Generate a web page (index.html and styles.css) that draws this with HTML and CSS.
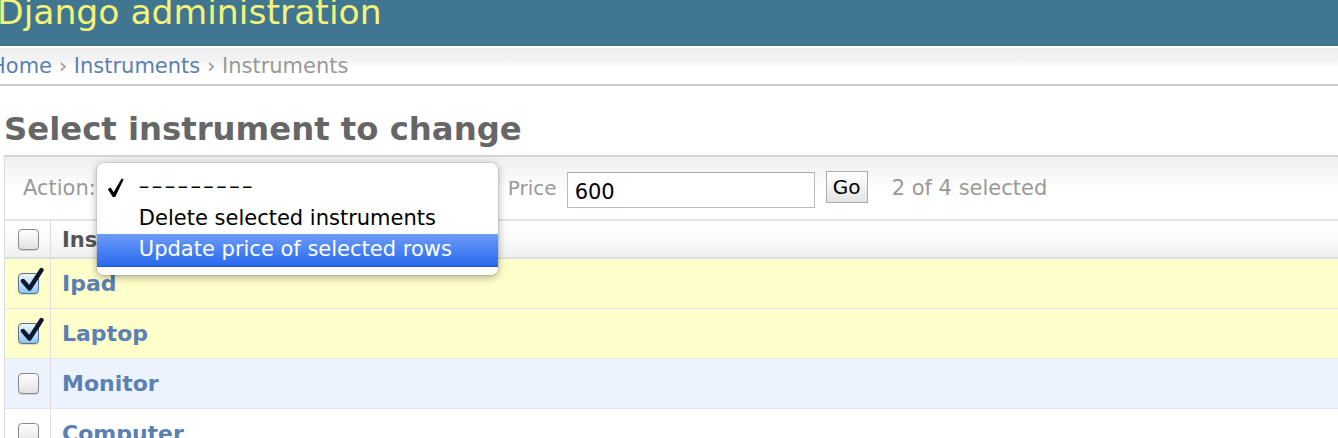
FILE: index.html
```html
<!DOCTYPE html>
<html>
<head>
<meta charset="utf-8">
<link rel="stylesheet" href="styles.css">
</head>
<body>
<div class="header"><div class="site-name">Django administration</div></div>
<div class="breadcrumbs"><a class="crumb-first" href="#">Home</a> › <a href="#">Instruments</a> › Instruments</div>
<div class="content">
  <h1 class="title">Select instrument to change</h1>
  <div class="changelist">
    <div class="actions">
      <span class="label">Action:</span>
      <div class="select-wrap">
        <div class="select"></div>
        <div class="popup">
          <div class="opt"><svg class="tick" viewBox="0 0 18 20" width="18" height="20"><path d="M0.8 11.2 L3.6 9.4 L6.6 14.2 L14.6 0.6 L16.6 1.6 L8.2 19 L5.8 19 Z" fill="#000"/></svg><span class="dashes">–––––––––</span></div>
          <div class="opt">Delete selected instruments</div>
          <div class="opt active">Update price of selected rows</div>
        </div>
      </div>
      <span class="label price">Price</span>
      <input class="price-input" type="text" value="600">
      <button class="go">Go</button>
      <span class="counter">2 of 4 selected</span>
    </div>
    <div class="thead">
      <div class="cell-check"><span class="cb"></span></div>
      <div class="cell-name head">Instrument</div>
    </div>
    <div class="row selected">
      <div class="cell-check"><span class="cb checked"><svg class="tick-mark" viewBox="0 0 26 26" width="26" height="26"><path d="M4 14 L10.5 21.5 L22.5 3" fill="none" stroke="#0d1730" stroke-width="4.4" stroke-linecap="round" stroke-linejoin="round"/></svg></span></div>
      <div class="cell-name"><a href="#">Ipad</a></div>
    </div>
    <div class="row selected">
      <div class="cell-check"><span class="cb checked"><svg class="tick-mark" viewBox="0 0 26 26" width="26" height="26"><path d="M4 14 L10.5 21.5 L22.5 3" fill="none" stroke="#0d1730" stroke-width="4.4" stroke-linecap="round" stroke-linejoin="round"/></svg></span></div>
      <div class="cell-name"><a href="#">Laptop</a></div>
    </div>
    <div class="row alt">
      <div class="cell-check"><span class="cb"></span></div>
      <div class="cell-name"><a href="#">Monitor</a></div>
    </div>
    <div class="row">
      <div class="cell-check"><span class="cb"></span></div>
      <div class="cell-name"><a href="#">Computer</a></div>
    </div>
  </div>
</div>
</body>
</html>
```
FILE: styles.css
```css
html, body {
  margin: 0;
  padding: 0;
  background: #fff;
  overflow: hidden;
  font-family: "DejaVu Sans", "Liberation Sans", sans-serif;
}
a { text-decoration: none; color: #5b80b2; }

.header {
  background: #417690;
  height: 46px;
  overflow: hidden;
}
.site-name {
  color: #f4f379;
  font-size: 34.6px;
  line-height: 34px;
  margin-top: -5px;
  margin-left: -3px;
  white-space: nowrap;
}

.breadcrumbs {
  border-top: 2px solid #fff;
  height: 36px;
  line-height: 36px;
  border-bottom: 2px solid #ccc;
  background: linear-gradient(#ececec 0%, #f4f4f4 35%, #fff 60%, #fff 100%);
  font-size: 21px;
  color: #999;
  white-space: nowrap;
}
.crumb-first { margin-left: -10px; }

.content {
  padding-left: 4px;
}
.title {
  margin: 0;
  padding-top: 23px;
  height: 46px;
  font-size: 32.3px;
  line-height: 40px;
  color: #666;
  font-weight: bold;
}

.changelist {
  border: 1px solid #ddd;
  border-top: 2px solid #d4d4d4;
  margin-right: -40px;
}

.actions {
  height: 62px;
  border-bottom: 2px solid #e4e4e4;
  background: linear-gradient(#f0f0f0 0%, #f8f8f8 30%, #fff 55%, #fff 100%);
  display: flex;
  align-items: center;
  padding-left: 18px;
  font-size: 21px;
  color: #999;
}
.label { margin-right: 1px; }
.select-wrap {
  position: relative;
  width: 401px;
  height: 34px;
}
.select {
  position: absolute;
  inset: 0;
  border-radius: 5px;
  border: 1px solid #9ab;
}
.popup {
  position: absolute;
  left: 0;
  top: -8px;
  width: 401px;
  height: 112px;
  box-sizing: border-box;
  padding-top: 7px;
  background: #fff;
  border-radius: 7px;
  box-shadow: 0 2px 9px rgba(0,0,0,0.35), 0 0 0 1px rgba(0,0,0,0.06);
  color: #000;
  font-size: 21px;
}
.opt {
  height: 32px;
  line-height: 32px;
  padding-left: 42px;
  position: relative;
  white-space: nowrap;
}
.opt.active {
  height: 33px;
  line-height: 31px;
  background: linear-gradient(#6d9cf6 0%, #4a83f3 50%, #2a69ee 100%);
  border-bottom: 1px solid #1b55d8;
  box-sizing: border-box;
  color: #fff;
}
.tick {
  position: absolute;
  left: 10px;
  top: 8px;
}
.dashes { letter-spacing: 2.4px; }

.price { margin-left: 10px; margin-right: 10px; font-size: 20px; }
.price-input {
  width: 248px;
  height: 36px;
  box-sizing: border-box;
  border: 1px solid #bbb;
  border-top-color: #aaa;
  font-family: "DejaVu Sans", sans-serif;
  font-size: 21px;
  padding: 4px 7px 0;
  color: #000;
  margin: 0;
  position: relative;
  top: 2px;
}
.go {
  margin-left: 11px;
  height: 32px;
  width: 42px;
  padding: 0;
  border: 1px solid #aaa;
  background: linear-gradient(#fff, #e4e4e4);
  font-family: "DejaVu Sans", sans-serif;
  font-size: 20px;
  color: #000;
  position: relative;
  top: -1px;
}
.counter { margin-left: 24px; font-size: 21px; }

.thead, .row {
  display: flex;
  align-items: stretch;
  border-bottom: 1px solid #ddd;
}
.thead {
  height: 36px;
  background: linear-gradient(#fff 0%, #fafafa 50%, #f0f0f0 100%);
  border-bottom: 2px solid #ddd;
}
.row { height: 49px; border-bottom-color: #e6e6e6; }
.row.selected { background: #ffffcc; }
.row.alt { background: #edf3fe; }

.cell-check {
  width: 46px;
  border-right: 1px solid #ddd;
  display: flex;
  align-items: center;
  justify-content: center;
  box-sizing: border-box;
  padding-left: 2px;
}
.cell-name {
  display: flex;
  align-items: center;
  padding-left: 11px;
  font-weight: bold;
  font-size: 22px;
}
.cell-name.head { font-size: 21px; color: #555; padding-top: 2px; }

.cb {
  position: relative;
  display: inline-block;
  width: 19px;
  height: 19px;
  border: 1px solid #8a8a8a;
  border-radius: 4px;
  background: linear-gradient(#fdfdfd 0%, #f0f0f0 50%, #e2e2e2 100%);
  box-shadow: 0 1px 1px rgba(0,0,0,0.15);
}
.cb.checked {
  border-color: #5b6f8c;
  background: linear-gradient(#eef6fe 0%, #c3e0fb 45%, #8cc6f6 100%);
}
.tick-mark {
  position: absolute;
  left: 0;
  top: -7px;
}
```
